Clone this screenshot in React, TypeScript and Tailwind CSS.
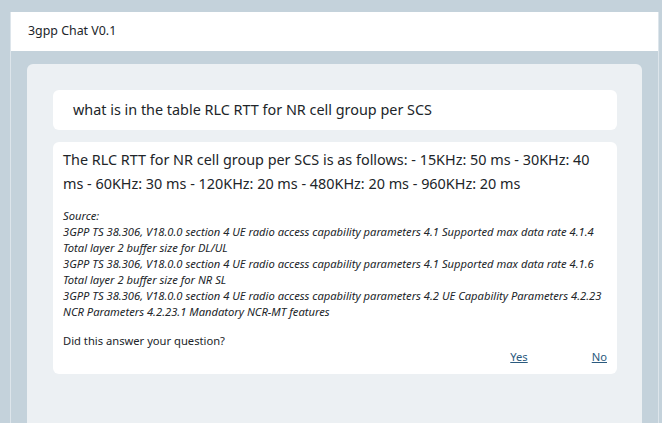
import React from "react";

const sources = [
  "3GPP TS 38.306, V18.0.0 section 4 UE radio access capability parameters 4.1 Supported max data rate 4.1.4 Total layer 2 buffer size for DL/UL",
  "3GPP TS 38.306, V18.0.0 section 4 UE radio access capability parameters 4.1 Supported max data rate 4.1.6 Total layer 2 buffer size for NR SL",
  "3GPP TS 38.306, V18.0.0 section 4 UE radio access capability parameters 4.2 UE Capability Parameters 4.2.23 NCR Parameters 4.2.23.1 Mandatory NCR-MT features",
];

export default function App() {
  return (
    <div className="h-[423px] w-[662px] overflow-hidden bg-[#c4d2db] pt-3 font-['Noto_Sans',sans-serif] text-[#212529]">
      <div className="ml-[10px] mr-[3px] h-full border-x border-[#dde5eb]">
        {/* Header */}
        <div className="flex h-[39px] items-center bg-white pl-[17px] text-[12.4px]">
          3gpp Chat V0.1
        </div>

        <div className="px-4 pt-[13px]">
          <div className="h-[400px] rounded-md bg-[#ecf0f3] pt-[26px] pl-[26px] pr-[25px]">
            {/* Question */}
            <div className="flex h-10 items-center rounded-md bg-white pl-5 text-[14.4px]">
              what is in the table RLC RTT for NR cell group per SCS
            </div>

            {/* Answer */}
            <div className="mt-3 rounded-md bg-white px-[10px] pt-[6px] pb-[9px]">
              <p className="text-[14.4px] leading-6">
                The RLC RTT for NR cell group per SCS is as follows: - 15KHz: 50 ms - 30KHz: 40 ms - 60KHz: 30 ms - 120KHz: 20 ms - 480KHz: 20 ms - 960KHz: 20 ms
              </p>
              <div className="mt-[12px] text-[11.2px] italic leading-4">
                <div>Source:</div>
                {sources.map((s) => (
                  <div key={s}>{s}</div>
                ))}
              </div>
              <p className="mt-[13px] text-[11.2px] leading-4">Did this answer your question?</p>
              <div className="flex justify-end gap-16 text-[11.2px] leading-4 text-[#2b5a7e]">
                <a href="#" className="underline">Yes</a>
                <a href="#" className="underline">No</a>
              </div>
            </div>
          </div>
        </div>
      </div>
    </div>
  );
}
